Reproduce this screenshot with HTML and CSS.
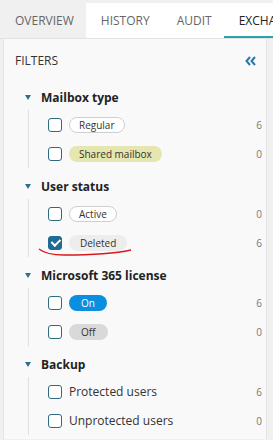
FILE: index.html
```html
<!DOCTYPE html>
<html lang="en">
<head>
    <meta charset="UTF-8">
    <meta name="viewport" content="width=device-width, initial-scale=1.0">
    <title>Filters</title>
    <link rel="stylesheet" href="styles.css">
</head>
<body>
    <div class="tabs">
        <div class="tab muted">OVERVIEW</div>
        <div class="tab">HISTORY</div>
        <div class="tab">AUDIT</div>
        <div class="tab active">EXCHANGE</div>
    </div>

    <div class="panel">
        <div class="panel-head">
            <span>FILTERS</span>
            <svg class="collapse" width="11" height="10" viewBox="0 0 11 10">
                <path d="M5 1 L1.5 5 L5 9 M10 1 L6.5 5 L10 9" fill="none" stroke="#2a78a8" stroke-width="2"/>
            </svg>
        </div>

        <div class="section">
            <div class="section-head"><span class="caret"></span>Mailbox type</div>
            <div class="options">
                <div class="option"><span class="check"></span><span class="badge outline">Regular</span><span class="count">6</span></div>
                <div class="option"><span class="check"></span><span class="badge yellow">Shared mailbox</span><span class="count">0</span></div>
            </div>
        </div>

        <div class="section">
            <div class="section-head"><span class="caret"></span>User status</div>
            <div class="options">
                <div class="option"><span class="check"></span><span class="badge outline">Active</span><span class="count">0</span></div>
                <div class="option"><span class="check checked"></span><span class="badge grey">Deleted</span><span class="count">6</span></div>
            </div>
            <!-- red hand mark under "Deleted" -->
            <svg class="scribble" width="100" height="10" viewBox="0 0 100 10">
                <path d="M1 2 C 6 6, 14 8, 26 8 C 50 8, 75 7, 93 3" fill="none" stroke="#d8191c" stroke-width="1.4"/>
            </svg>
        </div>

        <div class="section">
            <div class="section-head"><span class="caret"></span>Microsoft 365 license</div>
            <div class="options">
                <div class="option"><span class="check"></span><span class="badge blue">On</span><span class="count">6</span></div>
                <div class="option"><span class="check"></span><span class="badge dark">Off</span><span class="count">0</span></div>
            </div>
        </div>

        <div class="section">
            <div class="section-head"><span class="caret"></span>Backup</div>
            <div class="options">
                <div class="option"><span class="check"></span><span class="label">Protected users</span><span class="count">6</span></div>
                <div class="option"><span class="check"></span><span class="label">Unprotected users</span><span class="count">0</span></div>
            </div>
        </div>
    </div>
</body>
</html>
```

FILE: styles.css
```css
body {
    margin: 0;
    padding-top: 3px;
    background-color: #f0f0f0;
    font-family: 'Open Sans', 'Segoe UI', sans-serif;
    color: #333;
    width: 273px;
    height: 437px;
    overflow: hidden;
}
.tabs {
    display: flex;
    height: 35px;
    background: white;
    border-bottom: 1px solid #e2e2e2;
    white-space: nowrap;
    overflow: hidden;
}
.tab {
    padding: 0 12px 0 15px;
    line-height: 35px;
    font-size: 12px;
    color: #666;
    flex-shrink: 0;
}
.tab.muted {
    background-color: #f0f0f0;
}
.tab.active {
    color: #222;
    box-shadow: inset 0 -2px 0 #2aa4a8;
}
.panel {
    position: relative;
    margin-left: 3px;
    width: 264px;
    height: 400px;
    background-color: #f9f9f9;
    border-left: 1px solid #e4e4e4;
    border-right: 1px solid #e4e4e4;
    padding: 12px 4px 0 11px;
    box-sizing: border-box;
}
.panel-head {
    display: flex;
    justify-content: space-between;
    align-items: center;
    height: 19px;
    font-size: 12px;
    color: #333;
    margin-bottom: 15px;
    padding-right: 6px;
}
.section {
    position: relative;
    margin-bottom: 6px;
}
.section-head {
    display: flex;
    align-items: center;
    height: 25px;
    font-size: 12px;
    font-weight: 700;
    color: #222;
}
.caret {
    width: 0;
    height: 0;
    margin: 0 10px 0 10px;
    border-left: 3.5px solid transparent;
    border-right: 3.5px solid transparent;
    border-top: 5px solid #2d6f8e;
}
.options {
    margin-left: 13px;
    border-left: 1px solid #e0e0e0;
    padding-left: 19px;
}
.option {
    display: flex;
    align-items: center;
    height: 29px;
}
.check {
    width: 12px;
    height: 12px;
    border: 1.5px solid #2b6c80;
    border-radius: 3px;
    background: white;
    margin-right: 7px;
    flex-shrink: 0;
    position: relative;
}
.check.checked {
    background-color: #1e6c94;
    border-color: #1e6c94;
}
.check.checked::after {
    content: '';
    position: absolute;
    left: 3.5px;
    top: 0.5px;
    width: 3.5px;
    height: 7px;
    border-right: 2px solid white;
    border-bottom: 2px solid white;
    transform: rotate(45deg);
}
.badge {
    font-size: 10px;
    line-height: 14px;
    padding: 0 9px;
    border-radius: 8px;
    border: 1px solid transparent;
    color: #333;
}
.badge.outline {
    background: white;
    border-color: #cfcfcf;
}
.badge.yellow {
    background-color: #e5e6b0;
}
.badge.grey {
    background-color: #ededed;
    padding: 0 10px;
}
.badge.blue {
    background-color: #0a8ee0;
    color: white;
    padding: 0 11px;
}
.badge.dark {
    background-color: #d9d9d9;
    padding: 0 11px;
}
.label {
    font-size: 12px;
    color: #333;
}
.count {
    margin-left: auto;
    font-size: 10px;
    color: #777;
}
.scribble {
    position: absolute;
    left: 23px;
    top: 73px;
}
```
